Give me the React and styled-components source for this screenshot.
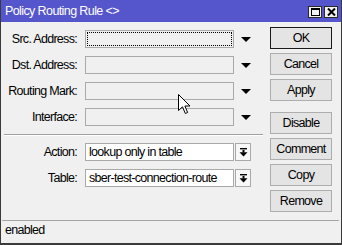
import React from "react";
import styled, { createGlobalStyle } from "styled-components";

const GlobalStyle = createGlobalStyle`
  html, body {
    margin: 0;
    padding: 0;
    background: #f0f0f0;
  }
  body {
    font-family: "Liberation Sans", Arial, sans-serif;
  }
`;

const fields = ["Src. Address:", "Dst. Address:", "Routing Mark:", "Interface:"];
const combos = [
  { label: "Action:", value: "lookup only in table" },
  { label: "Table:", value: "sber-test-connection-route" },
];

export default function App() {
  return (
    <>
      <GlobalStyle />
      <Window>
        <TitleBar>
          <Title>Policy Routing Rule &lt;&gt;</Title>
          <TitleButtons>
            <TitleButton>
              <svg width="9" height="8" viewBox="0 0 9 8">
                <rect x="0.5" y="0.5" width="8" height="7" fill="none" stroke="#000" />
                <rect x="0" y="0" width="9" height="2" fill="#000" />
              </svg>
            </TitleButton>
            <TitleButton>
              <svg width="9" height="8" viewBox="0 0 9 8">
                <path d="M1 0.5 L8 7.5 M8 0.5 L1 7.5" stroke="#000" strokeWidth="2" />
              </svg>
            </TitleButton>
          </TitleButtons>
        </TitleBar>

        <Body>
          <Form>
            {fields.map((f, i) => (
              <Row key={f}>
                <Label>{f}</Label>
                <Input $focused={i === 0} />
                <DropArrow>
                  <svg width="10" height="5" viewBox="0 0 10 5">
                    <polygon points="0,0 10,0 5,5" fill="#000" />
                  </svg>
                </DropArrow>
              </Row>
            ))}
            <Separator />
            {combos.map((c) => (
              <Row key={c.label}>
                <Label>{c.label}</Label>
                <Input $filled>{c.value}</Input>
                <ComboButton>
                  <svg width="9" height="9" viewBox="0 0 9 9">
                    <rect x="1" y="0" width="7" height="1.4" fill="#000" />
                    <rect x="3.5" y="2" width="2" height="2.5" fill="#000" />
                    <polygon points="0.5,4.3 8.5,4.3 4.5,8.5" fill="#000" />
                  </svg>
                </ComboButton>
              </Row>
            ))}
          </Form>

          <Buttons>
            <Button $primary>OK</Button>
            <Button>Cancel</Button>
            <Button>Apply</Button>
            <Button $spaced>Disable</Button>
            <Button>Comment</Button>
            <Button>Copy</Button>
            <Button>Remove</Button>
          </Buttons>
        </Body>

        <StatusBar>enabled</StatusBar>

        <Cursor>
          <svg width="13" height="21" viewBox="0 0 13 21">
            <path
              d="M0.5 0.5 L0.5 16.5 L4.5 12.8 L7.3 19.5 L9.6 18.5 L6.9 12 L12 12 Z"
              fill="#fff"
              stroke="#000"
              strokeWidth="1"
              strokeLinejoin="miter"
            />
          </svg>
        </Cursor>
      </Window>
    </>
  );
}

const Window = styled.div`
  position: relative;
  width: 342px;
  height: 245px;
  box-sizing: border-box;
  display: flex;
  flex-direction: column;
  background: #f0f0f0;
  border-left: 1px solid #3a3a3a;
  border-right: 1px solid #3a3a3a;
  border-bottom: 2px solid #3a3a3a;
  overflow: hidden;
`;

const TitleBar = styled.div`
  height: 22px;
  flex: none;
  display: flex;
  align-items: center;
  justify-content: space-between;
  background: #5656cc;
  padding: 0 4px 0 5px;
  margin: 0 -1px;
`;

const Title = styled.span`
  color: #fff;
  font-size: 12.5px;
  letter-spacing: -0.6px;
`;

const TitleButtons = styled.div`
  display: flex;
  gap: 2px;
  margin-top: 2px;
`;

const TitleButton = styled.div`
  width: 12px;
  height: 10px;
  border: 1px solid #2a2a2a;
  background: #f2f2f2;
  display: flex;
  align-items: center;
  justify-content: center;
`;

const Body = styled.div`
  flex: 1;
  display: flex;
  align-items: flex-start;
`;

const Form = styled.div`
  width: 269px;
  padding-top: 8px;
  display: flex;
  flex-direction: column;
  gap: 8px;
`;

const Row = styled.div`
  display: flex;
  align-items: center;
  height: 18px;
`;

const Label = styled.span`
  width: 84px;
  padding-right: 8px;
  box-sizing: border-box;
  text-align: right;
  font-size: 12.5px;
  letter-spacing: -0.7px;
  color: #000;
`;

const Input = styled.div`
  width: 149px;
  height: 18px;
  box-sizing: border-box;
  border: 1px solid #a9a9a9;
  background: ${(p) => (p.$filled ? "#fff" : "#f0f0f0")};
  font-size: 12.5px;
  letter-spacing: -0.7px;
  line-height: 16px;
  padding-left: 3px;
  color: #000;
  white-space: nowrap;
  overflow: hidden;
  outline: ${(p) => (p.$focused ? "1px dotted #000" : "none")};
  outline-offset: -3px;
`;

const DropArrow = styled.div`
  width: 10px;
  margin-left: 7px;
  display: flex;
  align-items: center;
`;

const ComboButton = styled.div`
  width: 16px;
  height: 18px;
  margin-left: 1px;
  box-sizing: border-box;
  border: 1px solid #a9a9a9;
  background: #f7f7f7;
  display: flex;
  align-items: center;
  justify-content: center;
`;

const Separator = styled.div`
  margin: 0 0 -1px 3px;
  width: 259px;
  height: 1px;
  background: #a0a0a0;
  border-bottom: 1px solid #fff;
`;

const Buttons = styled.div`
  width: 62px;
  padding-top: 5px;
  display: flex;
  flex-direction: column;
  gap: 4px;
`;

const Button = styled.div`
  height: 22px;
  box-sizing: border-box;
  margin-top: ${(p) => (p.$spaced ? "7px" : "0")};
  border: 1px solid ${(p) => (p.$primary ? "#1a1a1a" : "#adadad")};
  background: #e4e4e4;
  display: flex;
  align-items: center;
  justify-content: center;
  font-size: 12.5px;
  letter-spacing: -0.7px;
  color: #000;
`;

const StatusBar = styled.div`
  flex: none;
  height: 23px;
  margin: 0 2px 0 1px;
  box-sizing: border-box;
  border-top: 1px solid #a5a5a5;
  padding-left: 3px;
  font-size: 12.5px;
  letter-spacing: -0.7px;
  line-height: 18px;
  color: #000;
`;

const Cursor = styled.div`
  position: absolute;
  left: 177px;
  top: 94px;
  line-height: 0;
`;
